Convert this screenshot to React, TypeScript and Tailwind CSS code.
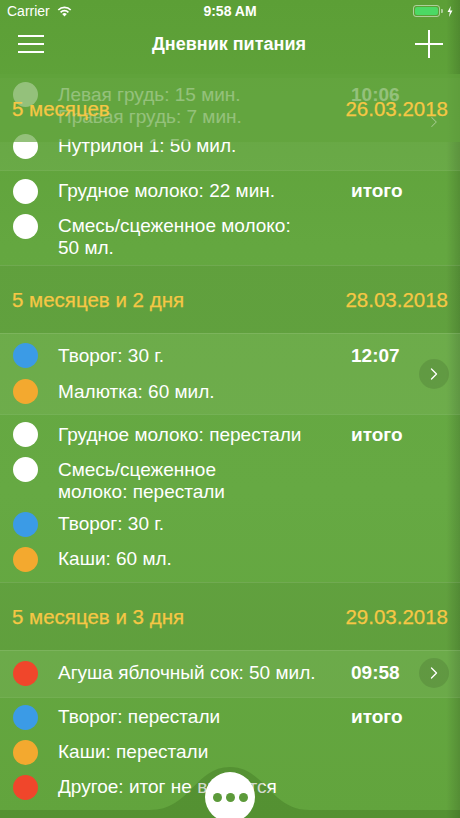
import { ChevronRight } from "lucide-react";
import type { ReactNode } from "react";

const FONT = { fontFamily: '"Liberation Sans", Arial, sans-serif' };

type Entry = { dot: string; text: ReactNode; wrap?: boolean };

function Item({ dot, text, wrap }: Entry) {
  return (
    <div className={`flex items-start ${wrap ? "-mb-[1px]" : ""}`}>
      <span className={`ml-[13px] h-[25px] w-[25px] shrink-0 rounded-full ${dot}`} />
      <p className="ml-[20px] pt-[1.5px] text-[19px] leading-[22px] text-white">{text}</p>
    </div>
  );
}

function Block({
  items,
  time,
  chevron,
  light,
  className = "",
  gap = "gap-[10px]",
}: {
  items: Entry[];
  time?: string;
  chevron?: boolean;
  light?: boolean;
  className?: string;
  gap?: string;
}) {
  return (
    <div className={`flex border-t border-white/10 ${light ? "bg-white/[0.05]" : ""} ${className}`}>
      <div className={`flex flex-1 flex-col ${gap}`}>
        {items.map((it, i) => (
          <Item key={i} {...it} />
        ))}
      </div>
      <div className="w-[68px] self-start pt-[1.5px] text-[19px] font-bold leading-[22px] text-white">{time}</div>
      <div className="mr-[11px] flex h-0 w-[30px] items-center justify-center self-center">
        {chevron && (
          <span className="flex h-[30px] w-[30px] shrink-0 items-center justify-center rounded-full bg-black/10">
            <ChevronRight size={20} strokeWidth={1.6} className="text-white" />
          </span>
        )}
      </div>
    </div>
  );
}

function Header({ age, date }: { age: string; date: string }) {
  return (
    <div className="flex h-[68px] items-center justify-between border-t border-white/10 bg-black/[0.04] px-[12px] pt-[2px] text-[20.5px] text-[#f6c745] [-webkit-text-stroke:0.25px_#f6c745]">
      <span>{age}</span>
      <span>{date}</span>
    </div>
  );
}

function StatusBar() {
  return (
    <div className="flex h-[22px] items-center justify-between px-[7px] text-[14px] text-white">
      <div className="flex w-[120px] items-center gap-[7px]">
        <span>Carrier</span>
        <svg width="15" height="11" viewBox="0 0 15 11">
          <path d="M7.5 10.5 L5.2 8 A3.4 3.4 0 0 1 9.8 8 Z" fill="white" />
          <path d="M3.6 6.3 A5.6 5.6 0 0 1 11.4 6.3" stroke="white" strokeWidth="1.7" fill="none" />
          <path d="M1.3 4 A8.8 8.8 0 0 1 13.7 4" stroke="white" strokeWidth="1.7" fill="none" />
        </svg>
      </div>
      <span className="font-bold">9:58 AM</span>
      <div className="flex w-[120px] items-center justify-end gap-[4px]">
        <div className="flex items-center">
          <div className="flex h-[12px] w-[27px] items-center rounded-[3px] border border-white/50 p-[1px]">
            <div className="h-full w-full rounded-[2px] bg-[#4cd964]" />
          </div>
          <div className="ml-[1px] h-[4px] w-[2px] rounded-r-[1px] bg-white/50" />
        </div>
        <svg width="6" height="11" viewBox="0 0 6 11">
          <path d="M3.8 0 L0.5 6 H2.8 L2 11 L5.5 4.6 H3.2 Z" fill="white" />
        </svg>
      </div>
    </div>
  );
}

function NavBar() {
  return (
    <div className="flex h-[44px] items-center justify-between px-[18px]">
      <div className="flex w-[26px] flex-col gap-[6px]">
        <span className="h-[2px] w-full bg-white" />
        <span className="h-[2px] w-full bg-white" />
        <span className="h-[2px] w-full bg-white" />
      </div>
      <h1 className="text-[18px] font-bold text-white">Дневник питания</h1>
      <svg width="30" height="30" viewBox="0 0 30 30" className="-mr-[2px]">
        <path d="M15 1 V29 M1 15 H29" stroke="white" strokeWidth="2" />
      </svg>
    </div>
  );
}

export default function App() {
  return (
    <div
      style={FONT}
      className="relative h-[818px] w-[460px] overflow-hidden bg-[#62a53e] bg-[linear-gradient(to_right,rgba(0,0,0,0)_97%,rgba(0,0,0,0.14)),linear-gradient(to_bottom,#5c9f36,#64a740_30%,#66a943_60%,#62a43d)]"
    >
      <StatusBar />
      <NavBar />

      <div className="relative mt-[12px]">
        <Block
          light
          className="border-t-0 pb-[11px] pt-[4px]"
          gap="gap-[7px]"
          time="10:06"
          items={[
            { dot: "bg-white", wrap: true, text: (<>Левая грудь: 15 мин.<br />Правая грудь: 7 мин.</>) },
            { dot: "bg-white", text: "Нутрилон 1: 50 мил." },
          ]}
        />
        <div className="absolute left-0 right-0 -top-[4px]">
          <div className="flex h-[68px] items-center justify-between bg-[#61a43c]/[0.68] px-[12px] pt-[2px] text-[20.5px] text-[#f6c745] [-webkit-text-stroke:0.25px_#f6c745]">
            <span>5 месяцев</span>
            <span>26.03.2018</span>
          </div>
        </div>
        <div className="absolute right-[17px] top-[35px] text-white/40">
          <ChevronRight size={18} strokeWidth={1.4} />
        </div>
      </div>
      <Block
        className="pb-[7px] pt-[8px]"
        time="итого"
        items={[
          { dot: "bg-white", text: "Грудное молоко: 22 мин." },
          { dot: "bg-white", wrap: true, text: (<>Смесь/сцеженное молоко:<br />50 мл.</>) },
        ]}
      />

      <Header age="5 месяцев и 2 дня" date="28.03.2018" />
      <Block
        light
        chevron
        className="pb-[10px] pt-[9px]"
        gap="gap-[11px]"
        time="12:07"
        items={[
          { dot: "bg-[#3b9be6]", text: "Творог: 30 г." },
          { dot: "bg-[#f3a92f]", text: "Малютка: 60 мил." },
        ]}
      />
      <Block
        className="pb-[10px] pt-[7px]"
        time="итого"
        items={[
          { dot: "bg-white", text: "Грудное молоко: перестали" },
          { dot: "bg-white", wrap: true, text: (<>Смесь/сцеженное<br />молоко: перестали</>) },
          { dot: "bg-[#3b9be6]", text: "Творог: 30 г." },
          { dot: "bg-[#f3a92f]", text: "Каши: 60 мл." },
        ]}
      />

      <Header age="5 месяцев и 3 дня" date="29.03.2018" />
      <Block
        light
        chevron
        className="pb-[11px] pt-[10px]"
        time="09:58"
        items={[{ dot: "bg-[#f0462b]", text: "Агуша яблочный сок: 50 мил." }]}
      />
      <Block
        className="pb-[10px] pt-[7px]"
        time="итого"
        items={[
          { dot: "bg-[#3b9be6]", text: "Творог: перестали" },
          { dot: "bg-[#f3a92f]", text: "Каши: перестали" },
          { dot: "bg-[#f0462b]", text: "Другое: итог не вносится" },
        ]}
      />

      <div className="absolute bottom-0 left-0 right-0 h-[52px]">
        <svg width="460" height="52" viewBox="0 0 460 52" className="absolute inset-0">
          <path
            d="M0 44 H150 C190 44 195 1 230 1 C265 1 270 44 310 44 H460 V52 H0 Z"
            fill="rgba(30,70,10,0.2)"
          />
        </svg>
        <div className="absolute left-[205px] top-[6px] flex h-[50px] w-[50px] items-start justify-center gap-[4px] rounded-full bg-white pt-[21px]">
          <span className="h-[9px] w-[9px] rounded-full bg-[#5c9a3a]" />
          <span className="h-[9px] w-[9px] rounded-full bg-[#5c9a3a]" />
          <span className="h-[9px] w-[9px] rounded-full bg-[#5c9a3a]" />
        </div>
      </div>
    </div>
  );
}
